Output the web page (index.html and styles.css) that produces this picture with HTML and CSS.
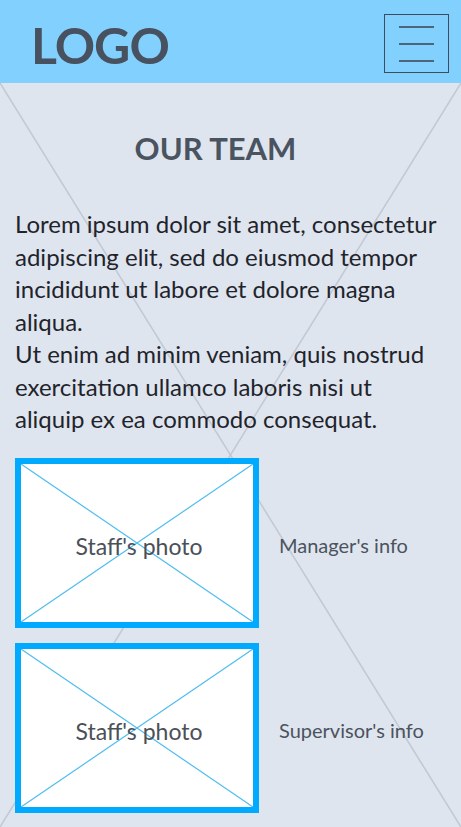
FILE: index.html
```html
<!DOCTYPE html>
<html lang="en">
<head>
  <meta charset="UTF-8" />
  <title>Our team</title>
  <meta name="viewport" content="width=device-width, initial-scale=1.0" />
  <link rel="stylesheet" href="styles.css">
</head>
<body>
  <header class="topbar">
    <div class="logo">LOGO</div>
    <button class="burger" aria-label="Menu">
      <span></span><span></span><span></span>
    </button>
  </header>

  <main class="page">
    <!-- placeholder cross behind the content -->
    <svg class="page-cross" viewBox="0 0 461 744" preserveAspectRatio="none">
      <line x1="0" y1="0" x2="461" y2="744" />
      <line x1="461" y1="0" x2="0" y2="744" />
    </svg>

    <h2 class="title">OUR TEAM</h2>
    <p class="intro">
      Lorem ipsum dolor sit amet, consectetur adipiscing elit, sed do eiusmod tempor incididunt ut labore et dolore magna aliqua.<br>
      Ut enim ad minim veniam, quis nostrud exercitation ullamco laboris nisi ut aliquip ex ea commodo consequat.
    </p>

    <div class="team">
      <div class="member">
        <div class="photo">
          <svg class="photo-cross" viewBox="0 0 232 158" preserveAspectRatio="none">
            <line x1="0" y1="0" x2="232" y2="158" />
            <line x1="232" y1="0" x2="0" y2="158" />
          </svg>
          <span>Staff's photo</span>
        </div>
        <div class="info">Manager's info</div>
      </div>
      <div class="member">
        <div class="photo">
          <svg class="photo-cross" viewBox="0 0 232 158" preserveAspectRatio="none">
            <line x1="0" y1="0" x2="232" y2="158" />
            <line x1="232" y1="0" x2="0" y2="158" />
          </svg>
          <span>Staff's photo</span>
        </div>
        <div class="info">Supervisor's info</div>
      </div>
    </div>
  </main>
</body>
</html>
```

FILE: styles.css
```css
* { box-sizing: border-box; margin: 0; padding: 0; }
html, body {
  width: 100%; height: 100%;
  background: #dfe5ee; font-family: 'Lato', 'Open Sans', sans-serif; color: #1f242c;
  overflow: hidden;
}

/* Шапка */
.topbar {
  height: 83px; background: #81d0fe;
  display: flex; align-items: center; justify-content: space-between;
  padding: 0 12px 0 31px;
}
.logo { font-size: 50px; font-weight: 700; color: #47515f; letter-spacing: -1px; line-height: 1; margin-top: 6px; }
.burger {
  width: 65px; height: 59px; margin-top: 4px;
  border: 1px solid #3a4d5e; background: transparent;
  display: flex; flex-direction: column; align-items: center; justify-content: center; gap: 15px;
}
.burger span { display: block; width: 35px; height: 2px; background: #4d6578; }

/* Контент */
.page { position: relative; height: 744px; padding: 47px 15px 0 15px; }
.page-cross { position: absolute; top: 0; left: 0; width: 100%; height: 100%; z-index: 0; }
.page-cross line { stroke: #c3c9d2; stroke-width: 1.6; }

.title {
  position: relative; z-index: 1;
  padding-right: 30px;
  font-size: 31px; line-height: 36px; font-weight: 700; color: #4a5360; text-align: center;
}
.intro {
  position: relative; z-index: 1;
  margin-top: 42px;
  font-size: 24px; line-height: 32.5px; color: #1f242c;
}

/* Команда */
.team { position: relative; z-index: 1; margin-top: 22px; display: flex; flex-direction: column; gap: 15px; }
.member { display: flex; align-items: center; gap: 20px; }
.photo {
  position: relative; width: 244px; height: 170px; flex-shrink: 0;
  border: 6px solid #00aaff; background: #fff;
  display: flex; align-items: center; justify-content: center;
}
.photo-cross { position: absolute; top: 0; left: 0; width: 100%; height: 100%; }
.photo-cross line { stroke: #4fbdf0; stroke-width: 1.2; }
.photo span { position: relative; font-size: 23px; color: #4b5058; margin: 6px 0 0 4px; }
.info { font-size: 20px; color: #4b5360; margin-top: 5px; }
```
